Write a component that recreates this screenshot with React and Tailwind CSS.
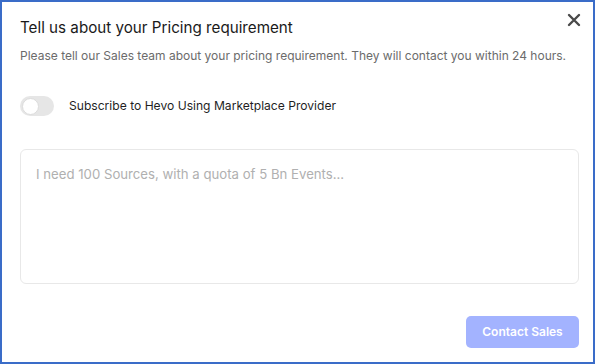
export default function App() {
  return (
    <div
      className="w-[595px] h-[364px] bg-white border-2 border-[#3a6cc8] relative overflow-hidden"
      style={{ fontFamily: "Inter, 'Liberation Sans', sans-serif" }}
    >
      <div className="flex flex-col h-full pl-[18px] pr-[14px]">
        <div className="flex items-start justify-between pt-[14px]">
          <h1 className="text-[15.2px] leading-[24px] text-[#1a1a1a] font-normal">
            Tell us about your Pricing requirement
          </h1>
          <button className="-mt-[3px] -mr-[2px]" aria-label="close">
            <svg width="14" height="14" viewBox="0 0 14 14">
              <path d="M2 2 L12 12 M12 2 L2 12" stroke="#4a4a4a" strokeWidth="2.4" strokeLinecap="round" />
            </svg>
          </button>
        </div>
        <p className="mt-[7px] text-[12px] leading-[18px] text-[#6b6b6b] whitespace-nowrap">
          Please tell our Sales team about your pricing requirement. They will contact you within 24 hours.
        </p>
        <div className="flex items-center mt-[31px]">
          <div className="w-[34px] h-[20px] rounded-full bg-[#e6e6e6] relative flex items-center">
            <div className="w-[17px] h-[17px] rounded-full bg-white border border-[#dcdcdc] ml-[2px]" />
          </div>
          <span className="ml-[15px] text-[12.1px] leading-[18px] text-[#1f1f1f]">
            Subscribe to Hevo Using Marketplace Provider
          </span>
        </div>
        <div className="mt-[33px] h-[135px] border border-[#e8e8e8] rounded-[6px] px-[15px] pt-[11px]">
          <span className="text-[13.2px] leading-[18px] text-[#b0b0b0]">
            I need 100 Sources, with a quota of 5 Bn Events...
          </span>
        </div>
        <div className="flex justify-end mt-[32px]">
          <button className="w-[113px] h-[32px] rounded-[5px] bg-[#a3b3ff] text-white text-[12px] font-semibold">
            Contact Sales
          </button>
        </div>
      </div>
    </div>
  );
}
